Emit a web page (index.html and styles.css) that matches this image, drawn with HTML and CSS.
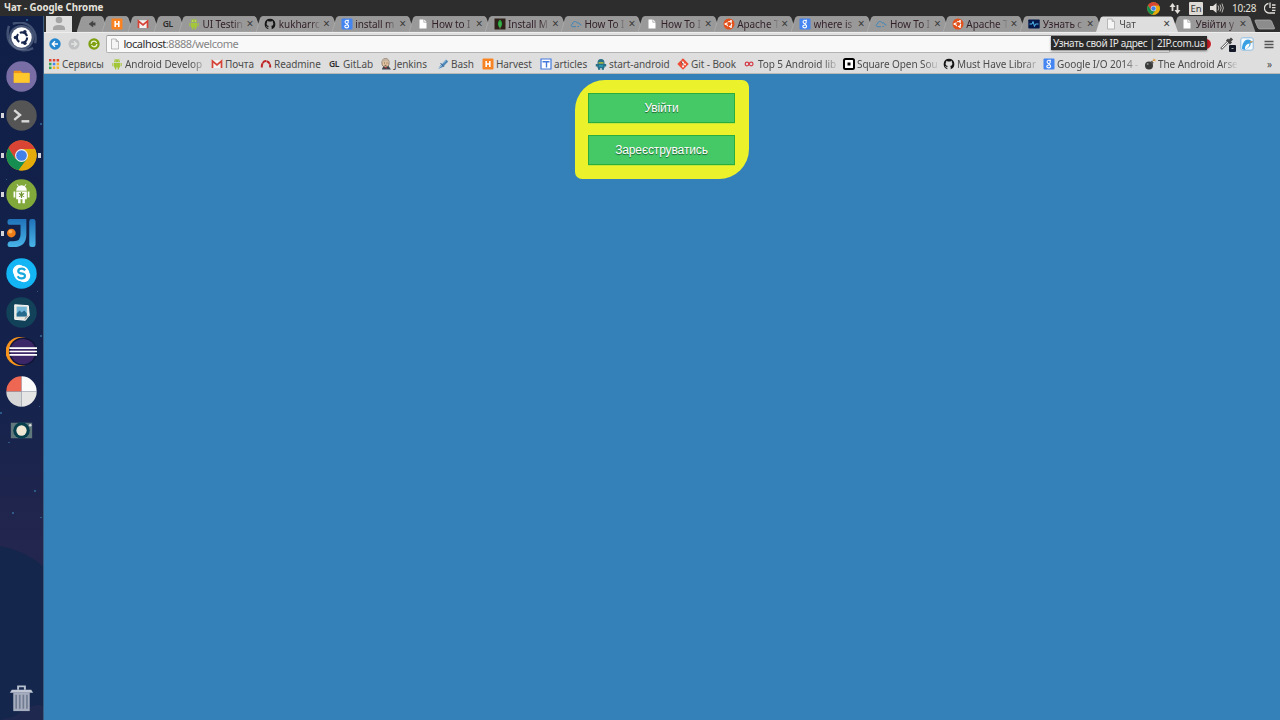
FILE: index.html
```html
<!DOCTYPE html>
<html lang="uk">
<head>
<meta charset="utf-8">
<title>Чат</title>
<link rel="stylesheet" href="styles.css">
</head>
<body>
<svg class="sprite" aria-hidden="true">
  <symbol id="tab-mini" viewBox="0 0 32 16"><path d="M0 16 4.500 2Q5 .5 7 .5H24Q25.500 .5 26 2L31 16Z" fill="#999" stroke="#b5b5b5" stroke-width=".6"/></symbol>
  <symbol id="tab-wide" viewBox="0 0 83 16"><path d="M0 16 4.500 2Q5 .5 7 .5H75Q76.500 .5 77 2L82 16Z" fill="#999" stroke="#b5b5b5" stroke-width=".6"/></symbol>
  <symbol id="tab-on" viewBox="0 0 83 16"><path d="M0 16 4.500 2Q5 .5 7 .5H75Q76.500 .5 77 2L82 16Z" fill="#dedede"/></symbol>
  <symbol id="file" viewBox="0 0 12 12"><path d="M2.500 1H7L9.500 3.500V11H2.500Z" fill="#f5f5f5" stroke="#a0a0a0" stroke-width=".7"/><path d="M7 1V3.500H9.500" fill="#ccc" stroke="#999" stroke-width=".5"/></symbol>
  <symbol id="file-w" viewBox="0 0 12 12"><path d="M2.500 1.500H6.500V4.500H9.500V10.500H2.500Z" fill="#fff"/><path d="M7.200 1.500 9.500 3.800H7.200Z" fill="#fff"/></symbol>
  <symbol id="droid" viewBox="0 0 12 12"><path d="M3 4.300A3 3 0 0 1 9 4.300ZM3 4.900H9V9.500H3ZM1.300 5H2.400V8.300H1.300ZM9.600 5H10.700V8.300H9.600ZM4 9H5.300V11.500H4ZM6.700 9H8V11.500H6.700Z" fill="#a4c639"/><path d="M3.500.8 4.500 2M8.500.8 7.500 2" stroke="#a4c639" stroke-width=".7"/><circle cx="4.700" cy="3" r=".4" fill="#fff"/><circle cx="7.300" cy="3" r=".4" fill="#fff"/></symbol>
  <symbol id="harvest" viewBox="0 0 12 12"><rect x=".5" y=".5" width="11" height="11" rx="1" fill="#f98323"/><path d="M4.200 3V9M7.800 3V9M4 6H8" stroke="#fff" stroke-width="1.600"/></symbol>
  <symbol id="gmail" viewBox="0 0 12 12"><path d="M1 2.200H11V10H1Z" fill="#f3f3f3"/><path d="M1.500 10V3L6 6.800 10.500 3V10" fill="none" stroke="#d54336" stroke-width="1.700"/></symbol>
  <symbol id="github" viewBox="0 0 12 12"><path d="M6 .7A5.400 5.400 0 0 0 4.300 11.200V9.700C2.900 10 2.500 9 1.900 8.300 3 8.200 3.300 9.300 4.400 8.700L4.800 8C2.400 7.700 2.200 5.300 3.200 4.300L3.200 2.800 4.800 3.500H7.200L8.800 2.800V4.300C9.800 5.300 9.600 7.700 7.200 8L7.700 9V11.200A5.400 5.400 0 0 0 6 .7Z" fill="#151515"/></symbol>
  <symbol id="google" viewBox="0 0 12 12"><rect x=".5" y=".5" width="11" height="11" rx="1" fill="#4485f2"/><g fill="none" stroke="#fff" stroke-width="1.100"><circle cx="5.700" cy="3.900" r="1.600"/><path d="M5.800 5.500C5.300 6.300 7.600 6.500 7.600 8.200 7.600 10.500 3.800 10.300 3.800 8.500 3.800 7.300 5 7 6.300 7M6.500 2.300H8"/></g></symbol>
  <symbol id="mongo" viewBox="0 0 12 12"><path d="M.5.5H11.500V11.500H.5Z" fill="#30201a"/><path d="M6 1.500C9.500 5 8 8.500 6 9.700 4 8.500 2.500 5 6 1.500Z" fill="#28a43c"/><path d="M6 4V10.800" stroke="#8aca80" stroke-width=".5"/></symbol>
  <symbol id="cloud" viewBox="0 0 12 12"><path d="M3 8.700C.8 9 .7 6.300 2.500 6 2.800 2.900 6.500 2.900 7.200 5.100 8.500 4.300 9.800 5.200 9.800 6.500L11.500 7.200M3 8.700H6M7.500 8.500H9" fill="none" stroke="#4086b8" stroke-width="1"/></symbol>
  <symbol id="ubuntu" viewBox="0 0 12 12"><circle cx="6" cy="6" r="5.500" fill="#e2501b"/><circle cx="6.200" cy="6" r="2.500" fill="none" stroke="#fff" stroke-width="1.100" stroke-dasharray="4.200 1"/><g fill="#fff"><circle cx="2.500" cy="6" r="1"/><circle cx="8" cy="2.900" r="1"/><circle cx="8" cy="9.100" r="1"/></g></symbol>
  <symbol id="pulse" viewBox="0 0 12 12"><rect x=".3" y="1.500" width="11.400" height="9" rx=".7" fill="#05184a"/><path d="M1.500 6H4L5 3.500 6.500 8.500 7.500 6H10.500" fill="none" stroke="#50b9f0" stroke-width="1"/></symbol>
  <symbol id="apps" viewBox="0 0 12 12"><path d="M1 1H3.500V3.500H1ZM4.800 1H7.300V3.500H4.800ZM8.600 1H11.100V3.500H8.600Z" fill="#df4532"/><path d="M1 4.800H3.500V7.300H1Z" fill="#30a552"/><path d="M4.800 4.800H7.300V7.300H4.800Z" fill="#4285f4"/><path d="M8.600 4.800H11.100V7.300H8.600ZM8.600 8.600H11.100V11.100H8.600ZM4.800 8.600H7.300V11.100H4.800Z" fill="#f4b52c"/><path d="M1 8.600H3.500V11.100H1Z" fill="#30a552"/></symbol>
  <symbol id="redmine" viewBox="0 0 12 12"><path d="M1.800 9.500C1.300 1 10.700 1 10.200 9.500" fill="none" stroke="#bf2525" stroke-width="2" stroke-dasharray="4.200 .4"/></symbol>
  <symbol id="jenkins" viewBox="0 0 12 12"><path d="M2 11 3.500 8H8.500L11 11.500H2Z" fill="#3d4650"/><ellipse cx="5.500" cy="4.800" rx="3.600" ry="4.200" fill="#e5c3a1" stroke="#715d50" stroke-width=".7"/><path d="M2 4Q2 .5 6 .7 9 1 9 5L7.500 3Z" fill="#c3b3a1"/><path d="M4 5H5M6.500 5H7.500M4.500 7.300H6.500" stroke="#443831" stroke-width=".7"/><path d="M4.500 9 6.500 11V9Z" fill="#c7303c"/></symbol>
  <symbol id="brush" viewBox="0 0 12 12"><path d="M1 11 4 6.500 9 1.500 11.200 3.500 6 9Z" fill="#4e86b7"/><path d="M5 6 9 2.500M1 11 5 7.200" stroke="#b6d5ef" stroke-width=".8"/><path d="M3.500 5 7 8.800" stroke="#3b668e"/></symbol>
  <symbol id="articles" viewBox="0 0 12 12"><path d="M1 1H11V11H1Z" fill="#fff" stroke="#4479dc" stroke-width="1.200"/><path d="M2.500 3.800H9.500M6.500 4V9.500" stroke="#4479dc" stroke-width="1.400"/></symbol>
  <symbol id="robot" viewBox="0 0 12 12"><path d="M2.500 5A3.500 4 0 0 1 9.500 5V10H2.500ZM.8 6H11.200V8.500H.8ZM3 10H5.300V11.800H3ZM6.700 10H9V11.800H6.700Z" fill="#286f87"/><path d="M3.500 4H8.500V5.800H3.500Z" fill="#9aae49"/><path d="M4 7H8V9H4Z" fill="#2595b0"/></symbol>
  <symbol id="git" viewBox="0 0 12 12"><path d="M6 .3 11.700 6 6 11.700.3 6Z" fill="#ef4d36"/><path d="M4 2.500 6 4.500V8.500M6 4.500 8 6.500" stroke="#fff" stroke-width=".8"/><g fill="#fff"><circle cx="6" cy="4.300" r=".9"/><circle cx="6" cy="8.500" r=".9"/><circle cx="8" cy="6.400" r=".9"/></g></symbol>
  <symbol id="infinity" viewBox="0 0 12 12"><g fill="none" stroke="#d43c49" stroke-width="1.200"><circle cx="3" cy="6" r="1.800"/><circle cx="7.200" cy="6" r="1.800"/></g></symbol>
  <symbol id="square" viewBox="0 0 12 12"><rect x="1" y="1" width="10" height="10" rx="1.500" fill="#fff" stroke="#000" stroke-width="2"/><path d="M4.500 4.500H7.500V7.500H4.500Z"/></symbol>
  <symbol id="bomb" viewBox="0 0 12 12"><circle cx="5" cy="7.500" r="4" fill="#393c3b"/><path d="M7 3.500 9 5.400" stroke="#555" stroke-width="2"/><path d="M8.500 3.500Q9 1.500 11 2" fill="none" stroke="#a26d20"/><path d="M9.500.6 11.500 3.400M11.700.8 9.500 3" stroke="#efa638" stroke-width=".8"/><circle cx="3.700" cy="6" r="1" fill="#8b8e8c"/></symbol>
  <symbol id="chrome" viewBox="0 0 32 32"><circle cx="16" cy="16" r="15.500" fill="#e4ab0b"/><path d="M2.500 8.200A15.500 15.500 0 0 1 30 9.300H16L9.800 19.500Z" fill="#d94435"/><path d="M2.500 8.200A15.500 15.500 0 0 0 13 31.200L21.500 19.500 9.800 19.500Z" fill="#168e52"/><path d="M30 9.300H16L22 19.500 13 31.200A15.500 15.500 0 0 0 30 9.300Z" fill="#e4ab0b"/><circle cx="16" cy="16" r="6.700" fill="#eee"/><circle cx="16" cy="16" r="5.500" fill="#4180e9"/></symbol>
</svg>

<header class="panel">
  <span class="panel-title">Чат - Google Chrome</span>
  <div class="indicators">
    <svg class="i-chrome"><use href="#chrome"/></svg>
    <svg class="i-net" viewBox="0 0 12 12"><path d="M3.500 9V2.500M8.500 3V9.500" stroke="#e2dfda" stroke-width="1.800"/><path d="M.5 5 3.500 1 6.500 5ZM5.500 8 8.500 12 11.500 8Z" fill="#e2dfda"/></svg>
    <span class="i-lang">En</span>
    <svg class="i-vol" viewBox="0 0 14 12"><path d="M0 4H3L6.500 1V11L3 8H0Z" fill="#e2dfda"/><path d="M8 3.500Q9.700 6 8 8.500M10 2.500Q12.300 6 10 9.500M12 1.500Q14.700 6 12 10.500" fill="none" stroke="#bbb9b5" stroke-width="1"/></svg>
    <span class="i-time">10:28</span>
    <svg class="i-power" viewBox="0 0 12 12"><path d="M4.500 1.500A4.800 4.800 0 0 0 6 11H11M6 .5V6M8 3H11.500M8 5.700H11.500M8 8.400H11.500" fill="none" stroke="#e2dfda" stroke-width="1.300"/></svg>
  </div>
</header>

<div class="desktop">
  <nav class="launcher">
    <svg class="sky" viewBox="0 0 43 704" preserveAspectRatio="none"><path d="M0 530Q25 535 43 550V704H0Z" fill="#14264c"/><path d="M15 700Q35 685 43 690V704H0Z" fill="#292a51" opacity=".5"/><g fill="#3978a9" opacity=".65"><path d="M34 474H36V476H34ZM12 496H14V498H12ZM0 396H2V398H0ZM37 275H38V276H37ZM40 319H42V321H40ZM6 163H7V164H6ZM8 426H10V427H8ZM39 390H40V391H39ZM40 501H42V502H40ZM26 3H28V5H26ZM40 107H42V109H40Z"/></g></svg>
    <a class="app"><svg viewBox="0 0 32 32"><path d="M3 4C-3 24 14 34 28 27M7 2C22-3 33 8 30 22" fill="none" stroke="#8190aa" stroke-width="2.500" opacity=".45"/><circle cx="16" cy="16" r="13" fill="#8c98b0" opacity=".45"/><circle cx="16" cy="16" r="10.500" fill="#fff"/><circle cx="16.500" cy="16" r="5.300" fill="none" stroke="#17264c" stroke-width="2.200" stroke-dasharray="9 2"/><g fill="#17264c"><circle cx="9.700" cy="16" r="1.800"/><circle cx="19.500" cy="10" r="1.800"/><circle cx="19.500" cy="22" r="1.800"/></g></svg></a>
    <a class="app"><svg viewBox="0 0 32 32"><circle cx="16" cy="16" r="15.700" fill="#786da5"/><path d="M8 10H15L17 12H24V22H8Z" fill="#ef9519"/><path d="M8 12.500H24.500V22.500H8Z" fill="#ffc92d"/></svg></a>
    <a class="app open"><svg viewBox="0 0 32 32"><circle cx="16" cy="16" r="15.700" fill="#555"/><path d="M8.500 10.500 14.500 15.500 8.500 20.500" fill="none" stroke="#d9d9d9" stroke-width="2.500"/><path d="M16 22H24" stroke="#d9d9d9" stroke-width="2.500"/></svg></a>
    <a class="app open active"><svg><use href="#chrome"/></svg></a>
    <a class="app open"><svg viewBox="0 0 32 32"><circle cx="16" cy="16" r="15.700" fill="#81a83a"/><path d="M10.500 12A5.500 5.500 0 0 1 21.500 12ZM10.500 13H21.500V21H10.500ZM7.800 13H9.600V19H7.800ZM22.400 13H24.200V19H22.400ZM12.500 20H15V25H12.500ZM17 20H19.500V25H17Z" fill="#fff"/><path d="M11.500 5.500 13 8M20.500 5.500 19 8" stroke="#fff"/><path d="M16 13.500V19.500M13.300 15 18.700 18M18.700 15 13.300 18" stroke="#709532" stroke-width="1.200"/><circle cx="16" cy="16.500" r="1.500" fill="#709532"/></svg></a>
    <a class="app open"><svg viewBox="0 0 32 32"><defs><linearGradient id="jg" x2="0" y2="1"><stop stop-color="#2072b8"/><stop offset="1" stop-color="#48b4e8"/></linearGradient></defs><path d="M4 1H21V17Q21 30 8 30H4Q1.500 30 1.500 27.500T4 24H8Q15 24 15 17V7H4Q1.500 7 1.500 4T4 1Z" fill="url(#jg)"/><rect x="24" y="1" width="6.500" height="29" rx="2.500" fill="url(#jg)"/><circle cx="5.500" cy="15.500" r="4.500" fill="#f17d17"/><circle cx="4.500" cy="14" r="2" fill="#ffb15b"/></svg></a>
    <a class="app"><svg viewBox="0 0 32 32"><circle cx="16" cy="16" r="15.700" fill="#13b5f4"/><circle cx="13.500" cy="13.500" r="6.500" fill="#fff"/><circle cx="18.500" cy="18.500" r="6.500" fill="#fff"/><circle cx="16" cy="16" r="8" fill="#fff"/><path d="M19.700 12.800Q18.500 10.800 16 11C12 11.200 11.500 15 15 15.800S20 16.800 19.500 19 13.800 22.200 12 18.800" fill="none" stroke="#17a9dd" stroke-width="2.300"/></svg></a>
    <a class="app"><svg viewBox="0 0 32 32"><circle cx="16" cy="16" r="15.700" fill="#124259"/><path d="M9 8 23 9 24 19 20 24 9 23Z" fill="#e7e7df" stroke="#fff"/><path d="M11 10H21.500V20H11Z" fill="#75b7d9"/><path d="M11 17 14 14 16 16 19 14 21.500 17V20H11Z" fill="#266b8d"/><path d="M19 24 20 20 24 19Z" fill="#aaa"/></svg></a>
    <a class="app"><svg viewBox="0 0 32 32"><circle cx="14.500" cy="16" r="15" fill="#f7941e"/><circle cx="17.500" cy="16" r="14.500" fill="#111539"/><circle cx="17.500" cy="16" r="13" fill="#3b2767"/><path d="M3.500 12.500H32M3.500 16H32M3.500 19.500H32" stroke="#fff" stroke-width="1.700"/></svg></a>
    <a class="app"><svg viewBox="0 0 32 32"><path d="M16 .3A15.700 15.700 0 0 0 .3 16H16Z" fill="#ee6752"/><path d="M16 .3A15.700 15.700 0 0 1 31.700 16H16Z" fill="#fafafa"/><path d="M.3 16A15.700 15.700 0 0 0 16 31.700V16Z" fill="#d6d6d6"/><path d="M31.700 16A15.700 15.700 0 0 1 16 31.700V16Z" fill="#e5e5e5"/></svg></a>
    <a class="app"><svg viewBox="0 0 32 32"><path d="M5 8H27V24H5Z" fill="#60777c"/><circle cx="16" cy="16" r="8.500" fill="#063e4d"/><circle cx="16" cy="16" r="5.300" fill="#efe7d4"/><circle cx="25" cy="10.500" r="1.300" fill="#ddd"/></svg></a>
    <a class="app trash"><svg viewBox="0 0 32 32"><path d="M12.500 7V3.500H19.500V7" fill="none" stroke="#b8bfce" stroke-width="2"/><path d="M6 7H26L28 10H4Z" fill="#c1c7d5"/><path d="M7.500 10H24.500V29H7.500Z" fill="#a5adbf"/><path d="M10.500 12V26.500M14.200 12V26.500M17.900 12V26.500M21.600 12V26.500" stroke="#717c91" stroke-width="1.700"/></svg></a>
  </nav>

  <main class="browser">
    <div class="tabstrip">
      <div class="avatar"><svg viewBox="0 0 26 16"><circle cx="13" cy="4" r="3.300" fill="#a5a5a5"/><path d="M7 14Q6 9 13 9T19 14Z" fill="#a5a5a5"/></svg></div>
      <div class="tabs">
        <div class="tab mini"><svg class="shape"><use href="#tab-mini"/></svg><svg class="fav" viewBox="0 0 12 12"><path d="M3 6 7 3V9ZM6 5H9V7H6M9 4V8" fill="#444" stroke="#444" stroke-width=".5"/></svg></div>
        <div class="tab mini"><svg class="shape"><use href="#tab-mini"/></svg><svg class="fav"><use href="#harvest"/></svg></div>
        <div class="tab mini"><svg class="shape"><use href="#tab-mini"/></svg><svg class="fav"><use href="#gmail"/></svg></div>
        <div class="tab mini"><svg class="shape"><use href="#tab-mini"/></svg><span class="gl">GL</span></div>
        <div class="tab"><svg class="shape"><use href="#tab-wide"/></svg><svg class="fav"><use href="#droid"/></svg><span class="label">UI Testin</span><i class="close">×</i></div>
        <div class="tab"><svg class="shape"><use href="#tab-wide"/></svg><svg class="fav"><use href="#github"/></svg><span class="label">kukharrc</span><i class="close">×</i></div>
        <div class="tab"><svg class="shape"><use href="#tab-wide"/></svg><svg class="fav"><use href="#google"/></svg><span class="label">install m</span><i class="close">×</i></div>
        <div class="tab"><svg class="shape"><use href="#tab-wide"/></svg><svg class="fav"><use href="#file-w"/></svg><span class="label">How to I</span><i class="close">×</i></div>
        <div class="tab"><svg class="shape"><use href="#tab-wide"/></svg><svg class="fav"><use href="#mongo"/></svg><span class="label">Install M</span><i class="close">×</i></div>
        <div class="tab"><svg class="shape"><use href="#tab-wide"/></svg><svg class="fav"><use href="#cloud"/></svg><span class="label">How To I</span><i class="close">×</i></div>
        <div class="tab"><svg class="shape"><use href="#tab-wide"/></svg><svg class="fav"><use href="#file-w"/></svg><span class="label">How To I</span><i class="close">×</i></div>
        <div class="tab"><svg class="shape"><use href="#tab-wide"/></svg><svg class="fav"><use href="#ubuntu"/></svg><span class="label">Apache T</span><i class="close">×</i></div>
        <div class="tab"><svg class="shape"><use href="#tab-wide"/></svg><svg class="fav"><use href="#google"/></svg><span class="label">where is</span><i class="close">×</i></div>
        <div class="tab"><svg class="shape"><use href="#tab-wide"/></svg><svg class="fav"><use href="#cloud"/></svg><span class="label">How To I</span><i class="close">×</i></div>
        <div class="tab"><svg class="shape"><use href="#tab-wide"/></svg><svg class="fav"><use href="#ubuntu"/></svg><span class="label">Apache T</span><i class="close">×</i></div>
        <div class="tab"><svg class="shape"><use href="#tab-wide"/></svg><svg class="fav"><use href="#pulse"/></svg><span class="label">Узнать с</span><i class="close">×</i></div>
        <div class="tab current"><svg class="shape"><use href="#tab-on"/></svg><svg class="fav"><use href="#file"/></svg><span class="label">Чат</span><i class="close">×</i></div>
        <div class="tab"><svg class="shape"><use href="#tab-wide"/></svg><svg class="fav"><use href="#file-w"/></svg><span class="label">Увійти у</span><i class="close">×</i></div>
      </div>
      <svg class="newtab" viewBox="0 0 22 11"><path d="M1 2Q.5 1 2 1H15.500Q17 1 17.500 2L20.500 9Q21 10 19.500 10H6Q4.500 10 4 9Z" fill="#8c8c8c" stroke="#b5b5b5" stroke-width=".7"/></svg>
    </div>

    <div class="toolbar">
      <svg class="nav-btn" viewBox="0 0 12 12"><circle cx="6" cy="6" r="5.700" fill="#2587cf"/><path d="M9 6H3.500M6 3.300 3.300 6 6 8.700" fill="none" stroke="#fff" stroke-width="1.400"/></svg>
      <svg class="nav-btn" viewBox="0 0 12 12"><circle cx="6" cy="6" r="5.500" fill="#bfc0c1"/><path d="M3 6H8.500M6 3.300 8.700 6 6 8.700" fill="none" stroke="#e3e3e3" stroke-width="1.400"/></svg>
      <svg class="nav-btn" viewBox="0 0 12 12"><circle cx="6" cy="6" r="5.700" fill="#7d9f10"/><circle cx="6" cy="6" r="2.800" fill="none" stroke="#eef3d8" stroke-width="1.300" stroke-dasharray="7.200 1.600"/></svg>
      <div class="omnibox"><svg class="fav"><use href="#file"/></svg><span class="url"><b>localhost</b>:8888/welcome</span></div>
      <div class="extensions">
        <svg viewBox="0 0 14 14"><rect x="1" y="1" width="12" height="11" rx="1" fill="#2583cb"/></svg>
        <svg viewBox="0 0 14 14"><circle cx="6" cy="7" r="5.500" fill="#bf1f25" stroke="#efefef"/></svg>
        <svg class="dropper" viewBox="0 0 16 16"><path d="M1 13 8 6" stroke="#777" stroke-width="2.500"/><path d="M2 12 8 6" stroke="#fff"/><path d="M7 3.500 11 7.500M9 5.500 12 2.500" stroke="#444" stroke-width="3"/><rect x="9" y="9" width="7" height="7" rx="1" fill="#151a28"/><path d="M11.500 12.500H13.500" stroke="#aaa"/></svg>
        <svg viewBox="0 0 14 14"><rect x=".8" y=".8" width="12.400" height="12.400" rx="2" fill="#f5faff" stroke="#8ebbe0"/><path d="M2 12C2 4 7 1 10 3L13 5 10.500 6.500C11 10 7 11 5 13Z" fill="#3aa0e4"/><path d="M5 12C5 8 7 7 9.500 6.500 9.500 10 7 10.500 6 12.500Z" fill="#fff"/><path d="M10 4 13.500 4.500 10.500 6Z" fill="#eb9a3d"/></svg>
        <svg class="menu" viewBox="0 0 14 14"><path d="M2.500 4.500H11.500M2.500 7.500H11.500M2.500 10.500H11.500" stroke="#545454" stroke-width="1.600"/></svg>
      </div>
      <div class="tooltip">Узнать свой IP адрес | 2IP.com.ua</div>
    </div>

    <div class="bookmarks">
      <a class="bm w63"><svg><use href="#apps"/></svg><span>Сервисы</span></a>
      <a class="bm w100 fade"><svg><use href="#droid"/></svg><span>Android Develop</span></a>
      <a class="bm w49"><svg><use href="#gmail"/></svg><span>Почта</span></a>
      <a class="bm w69"><svg><use href="#redmine"/></svg><span>Readmine</span></a>
      <a class="bm w51"><b class="gl">GL</b><span>GitLab</span></a>
      <a class="bm w57"><svg><use href="#jenkins"/></svg><span>Jenkins</span></a>
      <a class="bm w45"><svg><use href="#brush"/></svg><span>Bash</span></a>
      <a class="bm w58"><svg><use href="#harvest"/></svg><span>Harvest</span></a>
      <a class="bm w55"><svg><use href="#articles"/></svg><span>articles</span></a>
      <a class="bm w82"><svg><use href="#robot"/></svg><span>start-android</span></a>
      <a class="bm w67"><svg><use href="#git"/></svg><span>Git - Book</span></a>
      <a class="bm w99 fade"><svg><use href="#infinity"/></svg><span>Top 5 Android lib</span></a>
      <a class="bm w100 fade"><svg><use href="#square"/></svg><span>Square Open Sou</span></a>
      <a class="bm w100 fade"><svg><use href="#github"/></svg><span>Must Have Librar</span></a>
      <a class="bm w101 fade"><svg><use href="#google"/></svg><span>Google I/O 2014 -</span></a>
      <a class="bm w97 fade"><svg><use href="#bomb"/></svg><span>The Android Arse</span></a>
      <span class="more">»</span>
    </div>

    <section class="page">
      <div class="card">
        <button class="btn">Увійти</button>
        <button class="btn">Зареєструватись</button>
      </div>
    </section>
  </main>
</div>
</body>
</html>
```

FILE: styles.css
```css
* { box-sizing: border-box; }
body { margin: 0; width: 1280px; height: 720px; overflow: hidden; display: flex; flex-direction: column; font: 10px/14px "Noto Sans", "Open Sans", sans-serif; color: #4c4c4c; }
.sprite { position: absolute; width: 0; height: 0; }
svg { display: block; flex: none; }

.panel { height: 16px; flex: none; background: #2d2d2d; color: #e6e3dd; display: flex; justify-content: space-between; align-items: center; padding: 0 4px; }
.panel-title { font-weight: 700; font-size: 9.700px; letter-spacing: -.04px; }
.indicators { display: flex; align-items: center; }
.i-chrome { width: 13px; height: 13px; margin-right: 9px; }
.i-net { width: 12px; height: 12px; margin-right: 8px; }
.i-lang { width: 14px; height: 13px; border-radius: 1px; background: #dedbd7; color: #333; text-align: center; line-height: 13px; margin-right: 7px; font-size: 9.500px; }
.i-vol { width: 14px; height: 12px; margin-right: 8px; }
.i-time { width: 24px; margin-right: 8px; white-space: nowrap; letter-spacing: -.25px; }
.i-power { width: 12px; height: 12px; }

.desktop { flex: 1; display: flex; min-height: 0; }
.launcher { width: 43px; flex: none; position: relative; display: flex; flex-direction: column; padding-top: 1.700px; background: linear-gradient(#101f47, #15234c 55%, #23264e 75%, #1b2951); }
.sky { position: absolute; inset: 0; width: 43px; height: 704px; }
.app { position: relative; height: 39.300px; flex: none; display: flex; align-items: center; justify-content: center; }
.app svg { width: 31px; height: 31px; }
.app.open::before, .app.active::after { content: ""; position: absolute; left: 1px; top: 17px; width: 3px; height: 5px; background: #d5d5d9; }
.app.active::after { left: auto; right: 2px; }
.trash { margin-top: auto; margin-bottom: 2px; }

.browser { flex: 1; min-width: 0; display: flex; flex-direction: column; border-left: 1px solid #3b5e80; background: #3481ba; }
.tabstrip { height: 16px; flex: none; display: flex; background: #2d2d2d; padding-left: 2px; }
.avatar { width: 26px; height: 16px; background: #dedede; }
.avatar svg { width: 26px; height: 16px; }
.tabs { display: flex; margin-left: 4.700px; }
.tab { position: relative; width: 76.400px; height: 16px; flex: none; display: flex; align-items: center; padding-left: 8.500px; color: #321f28; }
.tab.mini { width: 25.700px; padding-left: 9px; }
.tab .shape { position: absolute; left: 0; top: 0; width: 83px; height: 16px; z-index: 0; }
.tab.mini .shape { width: 32px; }
.tab > :not(.shape) { position: relative; z-index: 2; }
.tab.current .shape { z-index: 1; }
.tab.current { color: #4c4c4c; }
.fav { width: 12px; height: 12px; }
.gl { font-weight: 600; font-size: 8.500px; letter-spacing: -.3px; color: #2b2b2b; }
.label { width: 42px; margin-left: 2.500px; overflow: hidden; white-space: nowrap; letter-spacing: -.08px; -webkit-mask-image: linear-gradient(90deg, #000 76%, transparent); mask-image: linear-gradient(90deg, #000 76%, transparent); }
.tab .close { font-style: normal; font-size: 12px; width: 8px; margin-left: 1.500px; text-align: center; color: #3b3b3b; }
.newtab { width: 22px; height: 11px; margin: 3px 0 0 5.500px; }

.toolbar { position: relative; height: 22px; flex: none; background: #dedede; border-top: 1px solid #eee; display: flex; align-items: center; padding: 1px 4px 0 5px; }
.nav-btn { width: 12px; height: 12px; margin-right: 7.300px; }
.omnibox { width: 1064px; height: 18px; margin-left: -1px; border: 1px solid #b3b3b3; border-top-color: #999; border-radius: 2px; background: #f9f9f9; display: flex; align-items: center; padding-left: 2px; }
.url { margin-left: 2.500px; font-size: 11px; color: #858585; letter-spacing: -.45px; }
.url b { font-weight: 400; color: #303030; }
.extensions { flex: 1; display: flex; align-items: center; justify-content: flex-end; gap: 6px; }
.extensions svg { width: 14px; height: 14px; }
.extensions .dropper { width: 16px; height: 16px; margin-right: -2px; }
.extensions .menu { margin-left: 2px; }
.tooltip { position: absolute; left: 1007px; top: 3px; width: 156px; height: 14px; background: #2a2a2a; color: #e5e5e5; line-height: 14px; letter-spacing: -.32px; padding-left: 2px; white-space: nowrap; box-shadow: 0 1px 2px rgba(0,0,0,.5); z-index: 5; }

.bookmarks { height: 20px; flex: none; display: flex; align-items: center; padding: 0 8px 0 4px; background: #dedede; border-bottom: 1px solid #b9b9b5; }
.bm { display: flex; align-items: center; flex: none; white-space: nowrap; letter-spacing: -.08px; }
.bm svg { width: 12px; height: 12px; margin-right: 2px; }
.bm .gl { width: 14px; flex: none; }
.fade { -webkit-mask-image: linear-gradient(90deg, #000 80%, transparent 97%); mask-image: linear-gradient(90deg, #000 80%, transparent 97%); }
.w45 { width: 45px; } .w49 { width: 49px; } .w51 { width: 51px; } .w55 { width: 55px; }
.w57 { width: 57px; } .w58 { width: 58px; } .w63 { width: 63px; } .w67 { width: 67px; }
.w69 { width: 69px; } .w82 { width: 82px; } .w97 { width: 97px; } .w99 { width: 99px; }
.w100 { width: 100px; } .w101 { width: 101px; }
.more { margin-left: auto; }

.page { flex: 1; display: flex; justify-content: center; align-items: flex-start; padding-top: 6px; }
.card { width: 174px; height: 99px; display: flex; flex-direction: column; gap: 12px; padding: 13px 14px 13px 13px; background: #ebf12b; border-radius: 30px 7px 30px 7px; }
.btn { width: 147px; height: 30px; padding: 0; border: 1px solid #2aad3c; background: #45c967; color: #fff; font: 12px "Liberation Sans", Arial, sans-serif; letter-spacing: -.12px; text-shadow: 0 1px 1px #1c5c2e; box-shadow: 0 .5px 0 #9bdc45; }
```
